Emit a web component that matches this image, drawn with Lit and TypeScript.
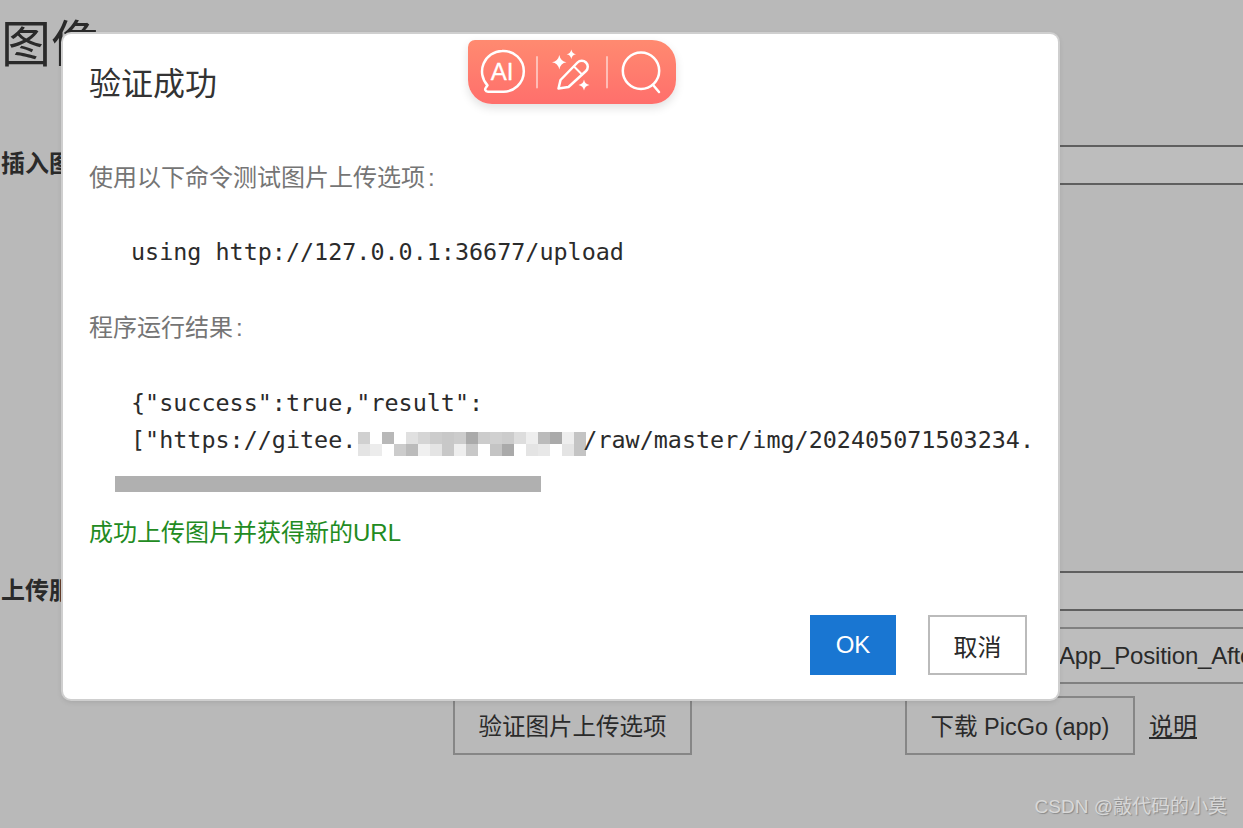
import { LitElement, html, css } from "lit";
import { customElement } from "lit/decorators.js";

const TOP = ["d0","ff","b8","ff","e0","d5","cc","c8","cc","aa","cc","d0","cc","dd","ee","bb","aa","ee","c4"];
const BOTTOM = ["e4","ec","ff","cc","bb","f0","e4","c8","ee","c8","ff","c4","aa","ff","e4","e8","ff","e4","c4"];
const CELLS = [...TOP, ...BOTTOM];

const SANS = css`"Liberation Sans", "Noto Sans CJK SC", sans-serif`;

@customElement("app-root")
export class AppRoot extends LitElement {
  static styles = css`
    :host { display: block; position: relative; width: 1243px; height: 828px; overflow: hidden; background: #b9b9b9; color: #2a2a2a; font-family: ${SANS}; font-size: 24px; }
    .page { display: flex; flex-direction: column; padding-left: 1px; }
    h1 { margin: 20px 0 0; font-size: 50px; line-height: 50px; font-weight: 400; }
    .field-row { display: grid; grid-template-columns: 300px 1fr; align-items: center; }
    .field-row.first { margin-top: 75px; }
    .field-row.second { margin-top: 386px; }
    .label { font-weight: 700; font-size: 24px; line-height: 34px; }
    .first .label { margin-bottom: 3px; }
    .second .label { margin-bottom: 1px; }
    .input { height: 40px; box-sizing: border-box; border-top: 2px solid #5f5f5f; border-bottom: 2px solid #5f5f5f; background: #bdbdbd; }
    .select { margin: 16px 0 0 299px; height: 57px; box-sizing: border-box; border-top: 2px solid #808080; border-bottom: 2px solid #808080; background: #bdbdbd; padding-left: 759px; line-height: 53px; white-space: nowrap; overflow: hidden; font-size: 24px; letter-spacing: -.2px; }
    .actions { display: flex; align-items: center; margin: 12px 0 0 452px; font-size: 23.5px; }
    .btn { height: 59px; box-sizing: border-box; border: 2px solid #868686; padding-bottom: 2px; display: flex; align-items: center; justify-content: center; white-space: nowrap; }
    .b1 { width: 239px; }
    .b2 { width: 230px; margin-left: 213px; }
    .link { margin: 0 0 3px 14px; font-size: 24px; text-decoration: underline; }

    .watermark { position: absolute; right: 16px; top: 795px; font-size: 19px; line-height: 24px; color: #d8d8d8; text-shadow: 1px 1px 1px #8a8a8a; white-space: nowrap; }

    .modal { position: absolute; left: 63px; top: 34px; width: 995px; height: 665px; box-sizing: border-box; background: #fff; border-radius: 8px; box-shadow: 0 0 0 2px #cfcfcf, 0 2px 6px rgba(0,0,0,.15); padding: 26px 31px 24px 26px; display: flex; flex-direction: column; }
    h2 { margin: 0 0 51px; font-size: 32px; line-height: 48px; font-weight: 400; color: #333; }
    p { margin: 0; line-height: 37.5px; color: #757575; }
    .colon { margin-left: 3px; }
    .code { margin: 37.5px 0; padding-left: 42px; font-family: "DejaVu Sans Mono", monospace; font-size: 23.4px; line-height: 37.5px; color: #2b2b2b; white-space: pre; }
    .code.last { margin-bottom: 0; }
    .code-line { height: 37.5px; }
    .code-line.top { margin-top: 1px; height: 36.5px; }
    .mosaic { display: inline-grid; grid-template-columns: repeat(19, 12px); grid-auto-rows: 12px; margin: 0 -3px 0 2px; vertical-align: 4px; }
    .redact { margin: 17px 0 0 26px; width: 426px; height: 16px; background: #b0b0b0; }
    p.ok { margin-top: 22px; color: #228b22; }
    .footer { margin-top: auto; display: flex; justify-content: flex-end; gap: 32px; }
    .ok-btn, .cancel-btn { height: 60px; box-sizing: border-box; display: flex; align-items: center; justify-content: center; }
    .ok-btn { width: 86px; background: #1976d2; color: #fff; }
    .cancel-btn { width: 99px; border: 2px solid #bbb; background: #fff; color: #2a2a2a; }

    .tools { position: absolute; left: 468px; top: 40px; width: 208px; height: 64px; border-radius: 7px 24px 24px 24px; background: linear-gradient(180deg, #ff8a70, #ff6f6c); box-shadow: 0 4px 10px rgba(0,0,0,.12); }
    .tools svg { display: block; }
    .tools text { font-family: ${SANS}; font-size: 24px; fill: #fff; stroke: #fff; stroke-width: .3px; }
  `;

  render() {
    return html`
      <div class="page">
        <h1>图像</h1>
        <div class="field-row first"><div class="label">插入图片时</div><div class="input"></div></div>
        <div class="field-row second"><div class="label">上传服务</div><div class="input"></div></div>
        <div class="select">App_Position_After_Upload</div>
        <div class="actions">
          <div class="btn b1">验证图片上传选项</div>
          <div class="btn b2">下载 PicGo (app)</div>
          <div class="link">说明</div>
        </div>
      </div>
      <div class="watermark">CSDN @敲代码的小莫</div>
      <div class="modal">
        <h2>验证成功</h2>
        <p>使用以下命令测试图片上传选项<span class="colon">:</span></p>
        <div class="code">using http://127.0.0.1:36677/upload</div>
        <p>程序运行结果<span class="colon">:</span></p>
        <div class="code last"><div class="code-line top">{"success":true,"result":</div><div class="code-line">["https://gitee.<span class="mosaic">${CELLS.map((c) => html`<i style="background:#${c}${c}${c}"></i>`)}</span>/raw/master/img/202405071503234.</div></div>
        <div class="redact"></div>
        <p class="ok">成功上传图片并获得新的URL</p>
        <div class="footer">
          <div class="ok-btn">OK</div>
          <div class="cancel-btn">取消</div>
        </div>
      </div>
      <div class="tools">
        <svg width="208" height="64" viewBox="0 0 208 64" fill="none" stroke="#fff" stroke-width="2.5" stroke-linecap="round" stroke-linejoin="round">
          <path d="M34 11A20.4 20.4 0 1 1 34 51.7H20C17 51.7 16.6 49 18 47.5L19.5 45.3A20.4 20.4 0 0 1 34 11Z"/>
          <text x="34" y="40" text-anchor="middle">AI</text>
          <path d="M69 17V47.5M139 17V47.5" stroke-opacity=".5" stroke-width="2"/>
          <path d="M90.5 48.5L92.5 40L109.5 22.5A6 6 0 0 1 118 31L100.5 47L90.5 48.5Z"/>
          <path d="M106 26.5L114 34.5" stroke-width="2"/>
          <g fill="#fff" stroke="none">
            <path d="M91.3 15Q92.5 21.2 98.5 22.3Q92.5 23.4 91.3 29.5Q90.1 23.4 84 22.3Q90.1 21.2 91.3 15Z"/>
            <path d="M103.3 9.5Q104 13.6 108 14.3Q104 15 103.3 19Q102.6 15 98.6 14.3Q102.6 13.6 103.3 9.5Z"/>
            <path d="M116 39.5Q116.8 44.2 121.5 45Q116.8 45.8 116 50.5Q115.2 45.8 110.5 45Q115.2 44.2 116 39.5Z"/>
          </g>
          <circle cx="173" cy="30.7" r="18.2"/>
          <path d="M185.5 45.5L191 52"/>
        </svg>
      </div>
    `;
  }
}
